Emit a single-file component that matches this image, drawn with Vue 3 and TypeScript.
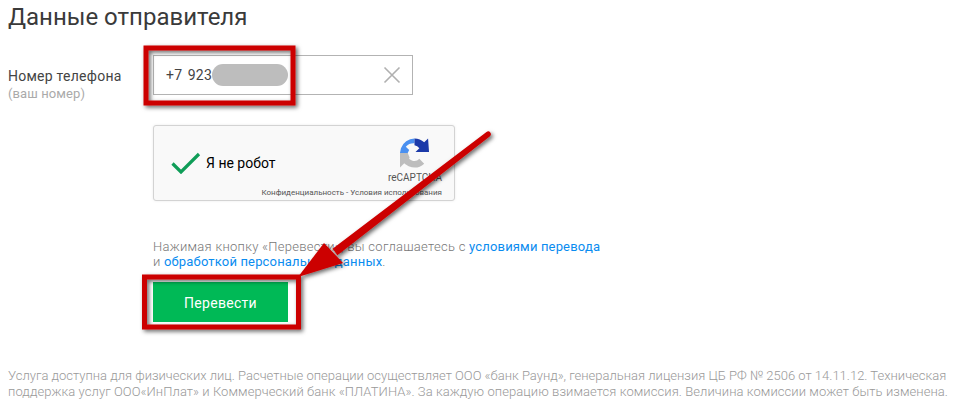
<script setup lang="ts">
const shadow = 'url(#sh)'
</script>

<template>
  <div class="page">
    <h1 class="title">Данные отправителя</h1>
    <div class="row">
      <div class="label">
        <div class="main">Номер телефона</div>
        <div class="sub">(ваш номер)</div>
      </div>
      <div class="field">
        <span class="num">+7&nbsp;923</span>
        <span class="blur"></span>
        <svg class="clear" width="18" height="18" viewBox="0 0 18 18">
          <path d="M1.5 1.5 L16.5 16.5 M16.5 1.5 L1.5 16.5" stroke="#b0b0b0" stroke-width="1.6" fill="none" />
        </svg>
      </div>
    </div>
    <div class="captcha">
      <svg class="check" width="30" height="22" viewBox="0 0 30 22">
        <path d="M1.5 11.5 L10 20 L28 2" stroke="#0f9d58" stroke-width="3.2" fill="none" />
      </svg>
      <span class="robot">Я не робот</span>
      <div class="brand">
        <svg class="logo" width="31" height="32" viewBox="0 0 32 32">
          <path d="M16 1 A15 15 0 0 0 2 11 L1 16 L9 16 L10.5 13 L7 9.5 A11 11 0 0 1 16 6 Z" fill="#4a90f0" />
          <path d="M16 1 A15 15 0 0 1 26 5 L30 1 L31 15 L17 15 L21 11 A8 8 0 0 0 16 8 Z" fill="#1c3aa9" />
          <path d="M1 16 L9 16 A7 7 0 0 0 21 22 L26 27 A15 15 0 0 1 1 16 Z" fill="#bdbdbd" />
          <path d="M1 16 L1 31 L6 26 L11 21 L9 16 Z" fill="#bdbdbd" />
        </svg>
        <div class="rc">reCAPTCHA</div>
        <div class="terms">Конфиденциальность - Условия использования</div>
      </div>
    </div>
    <p class="agree">Нажимая кнопку «Перевести», вы соглашаетесь с <a>условиями перевода</a><br />и <a>обработкой персональных данных</a>.</p>
    <button class="send">Перевести</button>
    <p class="foot">Услуга доступна для физических лиц. Расчетные операции осуществляет ООО «банк Раунд», генеральная лицензия ЦБ РФ № 2506 от 14.11.12. Техническая<br /><span class="foot-second">поддержка услуг ООО«ИнПлат» и Коммерческий банк «ПЛАТИНА». За каждую операцию взимается комиссия. Величина комиссии может быть изменена.</span></p>

    <svg class="marks" width="956" height="407" viewBox="0 0 956 407">
      <defs>
        <filter id="sh" x="-20%" y="-20%" width="140%" height="140%">
          <feDropShadow dx="2" dy="2" stdDeviation="2" flood-color="#000" flood-opacity="0.6" />
        </filter>
      </defs>
      <g :filter="shadow">
        <rect x="146" y="48" width="147" height="55" fill="none" stroke="#cc0000" stroke-width="5" />
        <rect x="144.500" y="277" width="154" height="50" fill="none" stroke="#cc0000" stroke-width="5" />
        <path d="M486.500 132 A2.700 2.700 0 0 1 489.700 136.400 L337.400 255.200 L332.600 248.800 Z" fill="#cc0000" />
        <path d="M298 277 L324 243 L343 263 Z" fill="#cc0000" />
      </g>
    </svg>
  </div>
</template>

<style scoped>
.page {
  position: relative;
  width: 956px;
  height: 407px;
  overflow: hidden;
  background: #fff;
  padding: 0 8px;
  box-sizing: border-box;
  font-family: Roboto, "Liberation Sans", sans-serif;
  color: #333;
}
.title {
  margin: 0;
  padding-top: 3px;
  font-size: 24px;
  line-height: 28px;
  font-weight: 400;
  color: #3a3a3a;
}
.row {
  display: flex;
  margin-top: 24px;
}
.label {
  width: 145px;
  padding-top: 12px;
}
.main {
  font-size: 14px;
  line-height: 18px;
  letter-spacing: 0.25px;
  color: #444;
}
.sub {
  font-size: 13px;
  line-height: 17px;
  letter-spacing: 0.1px;
  color: #aaa;
}
.field {
  width: 260px;
  height: 40px;
  box-sizing: border-box;
  border: 1px solid #b3b3b3;
  display: flex;
  align-items: center;
  padding: 0 11px 0 12px;
  font-size: 14px;
  color: #444;
}
.num {
  letter-spacing: 0.3px;
  word-spacing: 1.5px;
}
.blur {
  width: 76px;
  height: 22px;
  border-radius: 11px;
  background: #bdbdbd;
}
.clear {
  margin-left: auto;
}
.captcha {
  width: 302px;
  height: 76px;
  box-sizing: border-box;
  margin: 23px 0 0 145px;
  border: 1px solid #d3d3d3;
  border-radius: 3px;
  background: #f9f9f9;
  box-shadow: 0 0 3px rgba(0, 0, 0, 0.08);
  display: flex;
  align-items: center;
  padding: 0 12px 0 17px;
  position: relative;
}
.check {
  margin-right: 5px;
}
.robot {
  font-size: 14px;
  color: #000;
}
.brand {
  display: flex;
  flex-direction: column;
  align-items: flex-end;
  position: absolute;
  right: 12px;
  top: 11px;
}
.logo {
  margin-right: 12px;
}
.rc {
  font-size: 10px;
  line-height: 12px;
  margin-top: 3px;
  color: #555;
}
.terms {
  font-size: 8px;
  line-height: 10px;
  margin-top: 4px;
  color: #555;
}
.agree {
  margin: 38px 0 0 145px;
  font-size: 13px;
  line-height: 15px;
  letter-spacing: 0.28px;
  font-weight: 300;
  color: #777;
}
.agree a {
  color: #0a8cf0;
  font-weight: 400;
  letter-spacing: 0.16px;
}
.send {
  display: block;
  margin: 13px 0 0 145px;
  width: 135px;
  height: 40px;
  border: 0;
  padding-top: 2px;
  background: #00b956;
  color: #fff;
  font-family: inherit;
  font-size: 14px;
  letter-spacing: 0.3px;
}
.foot {
  margin: 46px 0 0;
  font-size: 13px;
  line-height: 16px;
  font-weight: 300;
  color: #999;
  white-space: nowrap;
}
.foot-second {
  letter-spacing: 0.07px;
}
.marks {
  position: absolute;
  left: 0;
  top: 0;
  pointer-events: none;
}
</style>
